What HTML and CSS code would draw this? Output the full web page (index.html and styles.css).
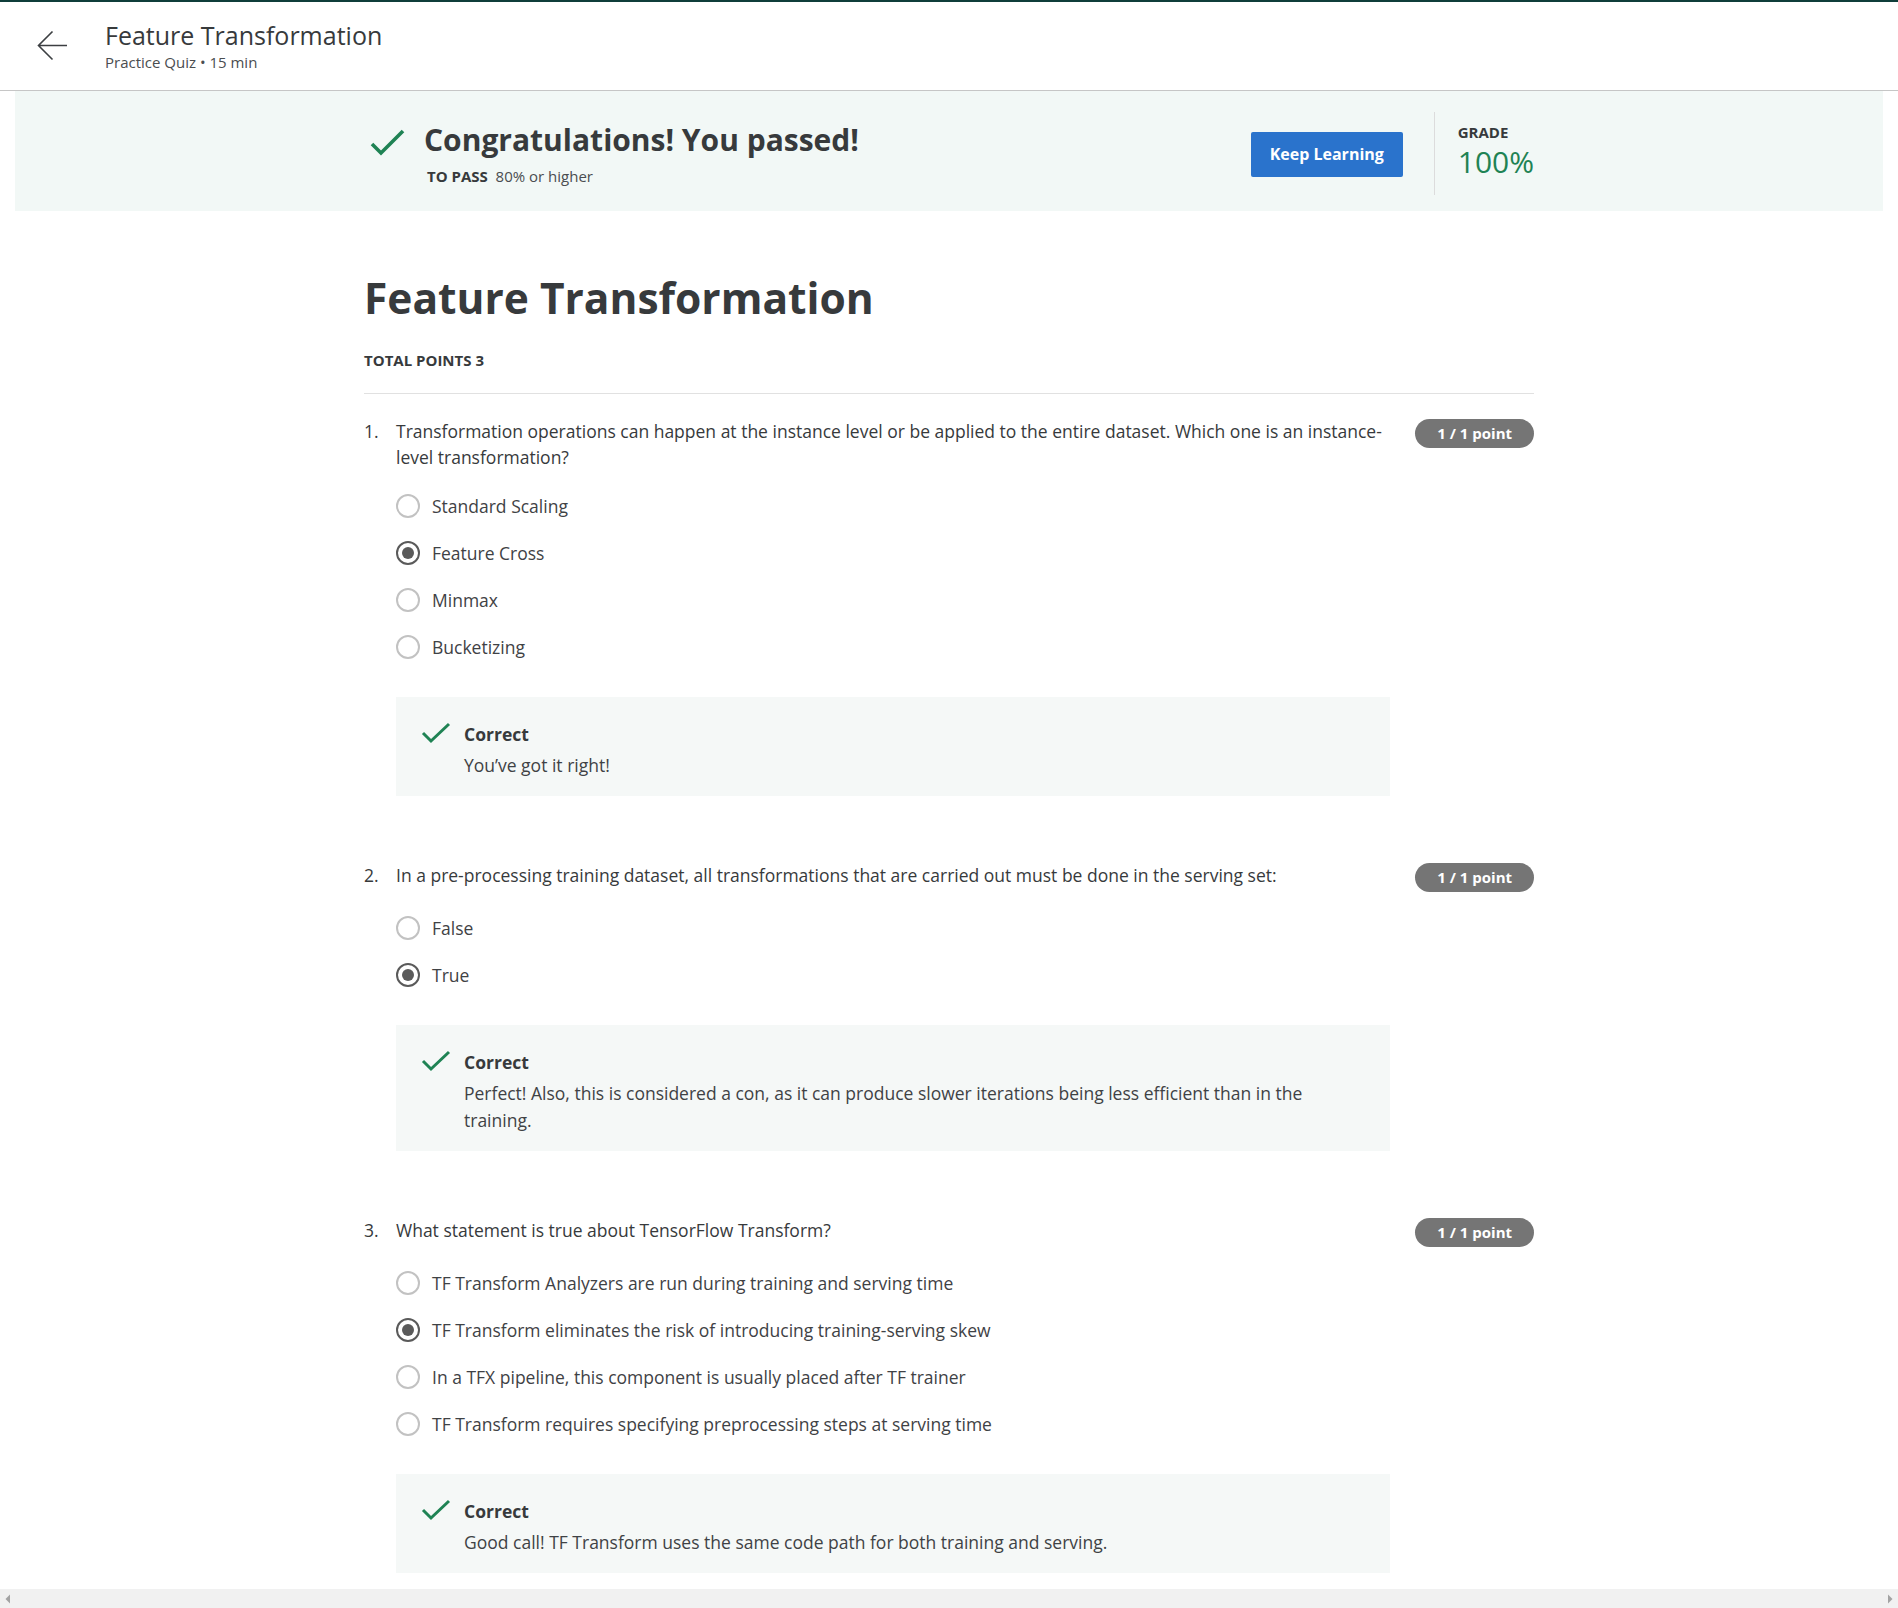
FILE: index.html
```html
<!DOCTYPE html>
<html lang="en">
<head>
<meta charset="utf-8">
<title>Feature Transformation</title>
<link rel="stylesheet" href="styles.css">
</head>
<body>
<header class="topbar">
  <svg class="back" width="32" height="32" viewBox="0 0 32 32"><path d="M30 15.5H1.5M15.5 1.5L1.5 15.5L15.5 29.5" fill="none" stroke="#3c3f42" stroke-width="1.6"/></svg>
  <div class="top-titles">
    <div class="top-title">Feature Transformation</div>
    <div class="top-sub">Practice Quiz • 15 min</div>
  </div>
</header>

<section class="banner">
  <div class="banner-inner">
    <div class="pass">
      <svg class="pass-check" width="36" height="28" viewBox="0 0 36 28"><polyline points="3,15 12,24 34,2" fill="none" stroke="#1f8354" stroke-width="3.6"/></svg>
      <div>
        <div class="pass-title">Congratulations! You passed!</div>
        <div class="pass-sub"><b>TO PASS</b>&nbsp; 80% or higher</div>
      </div>
    </div>
    <div class="grade-area">
      <button class="keep">Keep Learning</button>
      <div class="vdiv"></div>
      <div class="grade">
        <div class="grade-label">GRADE</div>
        <div class="grade-val">100%</div>
      </div>
    </div>
  </div>
</section>

<main class="content">
  <h1 class="quiz-title">Feature Transformation</h1>
  <div class="total">TOTAL POINTS 3</div>
  <hr class="rule">

  <div class="q">
    <div class="q-row">
      <span class="q-num">1.</span>
      <div class="q-text">Transformation operations can happen at the instance level or be applied to the entire dataset. Which one is an instance-level transformation?</div>
      <span class="pill">1 / 1 point</span>
    </div>
    <ul class="opts">
      <li class="opt"><span class="radio"></span>Standard Scaling</li>
      <li class="opt"><span class="radio on"></span>Feature Cross</li>
      <li class="opt"><span class="radio"></span>Minmax</li>
      <li class="opt"><span class="radio"></span>Bucketizing</li>
    </ul>
    <div class="fb">
      <svg class="fb-check" width="30" height="22" viewBox="0 0 30 22"><polyline points="2,11 10,19 28,2" fill="none" stroke="#1f8354" stroke-width="3"/></svg>
      <div>
        <div class="fb-title">Correct</div>
        <div class="fb-text">You’ve got it right!</div>
      </div>
    </div>
  </div>

  <div class="q">
    <div class="q-row">
      <span class="q-num">2.</span>
      <div class="q-text">In a pre-processing training dataset, all transformations that are carried out must be done in the serving set:</div>
      <span class="pill">1 / 1 point</span>
    </div>
    <ul class="opts">
      <li class="opt"><span class="radio"></span>False</li>
      <li class="opt"><span class="radio on"></span>True</li>
    </ul>
    <div class="fb">
      <svg class="fb-check" width="30" height="22" viewBox="0 0 30 22"><polyline points="2,11 10,19 28,2" fill="none" stroke="#1f8354" stroke-width="3"/></svg>
      <div>
        <div class="fb-title">Correct</div>
        <div class="fb-text">Perfect! Also, this is considered a con, as it can produce slower iterations being less efficient than in the training.</div>
      </div>
    </div>
  </div>

  <div class="q">
    <div class="q-row">
      <span class="q-num">3.</span>
      <div class="q-text">What statement is true about TensorFlow Transform?</div>
      <span class="pill">1 / 1 point</span>
    </div>
    <ul class="opts">
      <li class="opt"><span class="radio"></span>TF Transform Analyzers are run during training and serving time</li>
      <li class="opt"><span class="radio on"></span>TF Transform eliminates the risk of introducing training-serving skew</li>
      <li class="opt"><span class="radio"></span>In a TFX pipeline, this component is usually placed after TF trainer</li>
      <li class="opt"><span class="radio"></span>TF Transform requires specifying preprocessing steps at serving time</li>
    </ul>
    <div class="fb">
      <svg class="fb-check" width="30" height="22" viewBox="0 0 30 22"><polyline points="2,11 10,19 28,2" fill="none" stroke="#1f8354" stroke-width="3"/></svg>
      <div>
        <div class="fb-title">Correct</div>
        <div class="fb-text">Good call! TF Transform uses the same code path for both training and serving.</div>
      </div>
    </div>
  </div>
</main>

<div class="hscroll">
  <svg width="8" height="10" viewBox="0 0 8 10"><path d="M6 0.5L1.5 5L6 9.5Z" fill="#a3a3a3"/></svg>
  <svg width="8" height="10" viewBox="0 0 8 10"><path d="M2 0.5L6.5 5L2 9.5Z" fill="#a3a3a3"/></svg>
</div>
</body>
</html>
```

FILE: styles.css
```css
html { overflow: hidden; }
body {
  margin: 0;
  font-family: "Open Sans", "Liberation Sans", sans-serif;
  color: #373a3c;
  background: #fff;
}

.topbar {
  height: 88px;
  border-top: 2px solid #0f3d3a;
  border-bottom: 1px solid #c6c6c6;
  display: flex;
  align-items: center;
  padding-left: 37px;
}
.back { display: block; flex: none; }
.top-titles { margin-left: 36px; margin-top: -2px; }
.top-title { font-size: 25px; line-height: 32px; color: #373a3c; }
.top-sub { font-size: 15px; line-height: 20px; margin-top: 1px; color: #4a4d50; }

.banner {
  margin: 0 15px;
  background: #f2f8f6;
  height: 120px;
}
.banner-inner {
  width: 1170px;
  margin: 0 auto;
  height: 120px;
  box-sizing: border-box;
  padding-top: 4px;
  display: flex;
  align-items: center;
  justify-content: space-between;
}
.pass { display: flex; align-items: flex-start; }
.pass-check { margin: 9px 19px 0 5px; flex: none; }
.pass-title { font-size: 30px; line-height: 40px; font-weight: 700; color: #373a3c; }
.pass-sub { font-size: 15px; line-height: 20px; margin-top: 6px; padding-left: 3px; color: #4a4d50; }
.pass-sub b { font-weight: 700; color: #373a3c; }

.grade-area { display: flex; align-items: center; }
.keep {
  width: 152px;
  height: 45px;
  border: 0;
  border-radius: 2px;
  background: #2a73cc;
  color: #fff;
  font-family: inherit;
  font-size: 16px;
  font-weight: 700;
  padding: 0;
  margin-top: 2px;
}
.vdiv { width: 1px; height: 83px; background: #dcdcdc; margin: 0 23px 0 31px; }
.grade { margin-top: -3px; }
.grade-label { font-size: 15px; line-height: 20px; font-weight: 700; color: #373a3c; }
.grade-val { font-size: 30px; line-height: 38px; color: #1f8354; margin-top: 1px; }

.content { width: 1170px; margin: 0 auto; }
.quiz-title {
  font-size: 42.5px;
  line-height: 56px;
  font-weight: 700;
  margin: 59px 0 24px;
  color: #373a3c;
}
.total { font-size: 15px; line-height: 20px; font-weight: 700; color: #373a3c; }
.rule { border: 0; height: 1px; background: #e1e1e1; margin: 23px 0 24px; }

.q { margin-bottom: 66px; }
.q-row { display: flex; align-items: flex-start; font-size: 17.5px; line-height: 26px; }
.q-num { width: 32px; flex: none; }
.q-text { flex: 1; }
.pill {
  flex: none;
  margin: 1px 0 0 24px;
  height: 29px;
  line-height: 29px;
  padding: 0 22px;
  border-radius: 15px;
  background: #757575;
  color: #fff;
  font-size: 15px;
  font-weight: 700;
}

.opts { list-style: none; margin: 12px 0 0 32px; padding: 0; }
.opt {
  height: 47px;
  display: flex;
  align-items: center;
  font-size: 17.5px;
  color: #3f4245;
}
.radio {
  width: 24px;
  height: 24px;
  box-sizing: border-box;
  border: 2px solid #c2c2c2;
  border-radius: 50%;
  margin-right: 12px;
  flex: none;
  display: flex;
  align-items: center;
  justify-content: center;
}
.radio.on { border-color: #5a5a5a; }
.radio.on::after {
  content: "";
  width: 12px;
  height: 12px;
  border-radius: 50%;
  background: #5a5a5a;
}

.fb {
  margin: 27px 0 0 32px;
  width: 994px;
  box-sizing: border-box;
  background: #f5f8f7;
  padding: 25px 48px 17px 25px;
  display: flex;
  align-items: flex-start;
}
.fb-check { flex: none; margin: 0 13px 0 0; }
.fb-title { font-size: 17.5px; line-height: 24px; font-weight: 700; color: #373a3c; }
.fb-text { font-size: 17.5px; line-height: 27px; margin-top: 6px; color: #3f4245; }

.hscroll {
  position: fixed;
  left: 0;
  right: 0;
  bottom: 0;
  height: 19px;
  background: #f1f1f1;
  display: flex;
  align-items: center;
  justify-content: space-between;
  padding: 0 4px;
}
```
